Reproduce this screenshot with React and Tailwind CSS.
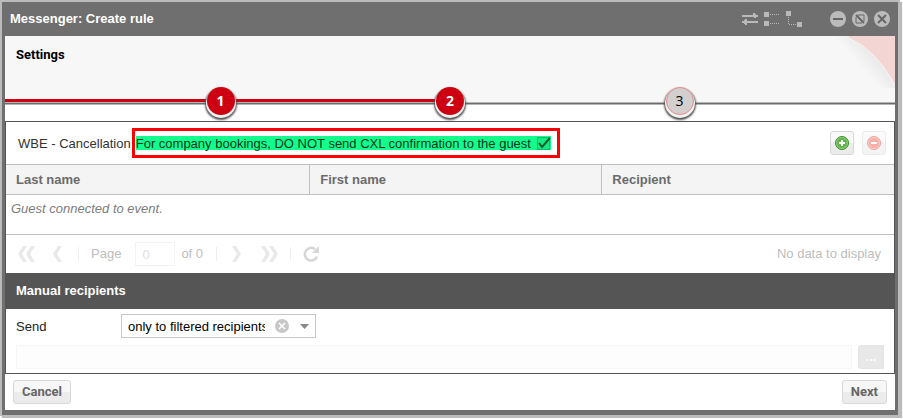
import { useState } from "react";

const STEPS = [1, 2, 3];
const CURRENT_STEP = 2;

const toolButton =
  "flex h-6 w-6 items-center justify-center rounded-[3px] border border-[#d8d8d8] bg-linear-to-b from-[#f8f8f8] from-50% to-[#ebebeb] to-50%";
const textButton =
  "h-6 rounded-[3px] border border-[#d8d8d8] bg-linear-to-b from-[#f7f7f7] from-50% to-[#ececec] to-50% px-2 font-[Roboto,sans-serif] font-bold text-[#666]";

function TitleBar() {
  return (
    <header className="flex h-[34px] items-center justify-between bg-[#6f6f6f] pr-2 pl-2">
      <h1 className="font-bold text-white">Messenger: Create rule</h1>
      <div className="flex items-center">
        <div className="mr-7 flex items-center gap-1.5 text-[#b9b9b9]">
          <button type="button" aria-label="Swap">
            <svg width="16" height="18" viewBox="0 0 16 18" className="block">
              <path
                d="M0 5h11V3h2v1h1v1h2v2h-2v1h-2V7H0zM16 11H5V9H3v1H2v1H0v2h2v1h1v1h2v-2h11z"
                fill="currentColor"
              />
            </svg>
          </button>
          <button type="button" aria-label="List view">
            <svg width="16" height="18" viewBox="0 0 16 18" className="block">
              <path d="M0 2h5v5H0zM0 11h5v5H0z" fill="currentColor" />
              <path d="M6 4.500h10M6 13.500h10" stroke="currentColor" strokeDasharray="1 1" />
            </svg>
          </button>
          <button type="button" aria-label="Tree view">
            <svg width="16" height="18" viewBox="0 0 16 18" className="block">
              <path d="M0 1h5v5H0zM11 12h5v5h-5z" fill="currentColor" />
              <path d="M2.500 7v8M3 14.500h8" stroke="currentColor" strokeDasharray="1 1" />
            </svg>
          </button>
        </div>
        <div className="flex items-center gap-1.5">
          <button type="button" aria-label="Minimize">
            <svg width="16" height="16" viewBox="0 0 16 16" className="block">
              <circle cx="8" cy="8" r="8" fill="#bbb" />
              <path d="M3 8h10" stroke="#666" strokeWidth="2" />
            </svg>
          </button>
          <button type="button" aria-label="Restore">
            <svg width="16" height="16" viewBox="0 0 16 16" className="block">
              <circle cx="8" cy="8" r="8" fill="#bbb" />
              <path d="M4 4l8 8" stroke="#666" strokeWidth="2" />
              <path d="M6 4h6v6M4 6v6h6" fill="none" stroke="#666" />
            </svg>
          </button>
          <button type="button" aria-label="Close">
            <svg width="16" height="16" viewBox="0 0 16 16" className="block">
              <circle cx="8" cy="8" r="8" fill="#bbb" />
              <path d="M4 4l8 8M12 4l-8 8" stroke="#666" strokeWidth="2" />
            </svg>
          </button>
        </div>
      </div>
    </header>
  );
}

function Wizard() {
  return (
    <section className="h-[85px] bg-white">
      <div className="relative h-[63px] bg-[#f7f7f7] px-[11px] pt-[9px]">
        <h2 className="font-[Roboto,sans-serif] font-bold text-black">Settings</h2>
        <svg
          width="64"
          height="52"
          viewBox="0 0 64 52"
          className="absolute top-0 right-0"
          aria-hidden="true"
        >
          <defs>
            <linearGradient
              id="fold"
              gradientUnits="userSpaceOnUse"
              x1="46"
              y1="22"
              x2="32"
              y2="34"
            >
              <stop offset="0" stopColor="#e9e9e9" />
              <stop offset="1" stopColor="#f7f7f7" />
            </linearGradient>
          </defs>
          <path d="M0 0h20Q46 13 64 49v3H40Q10 30 0 0z" fill="url(#fold)" />
          <path d="M18 0h46v48Q45 14 18 2z" fill="#f3d6d3" />
          <path d="M18 2Q45 14 63 48" fill="none" stroke="#fbf3f2" />
        </svg>
      </div>
      <div className="h-[3px] bg-[#f7f7f7]">
        <div className="h-full w-1/2 bg-[#cc0011]" />
      </div>
      <div className="h-[3px] border-y border-t-[#b5b5b5] border-b-[#b5b5b5] bg-[#6b6b6b]" />
      <ol className="relative -mt-[18px] flex justify-evenly">
        {STEPS.map((step) => (
          <li
            key={step}
            className={
              step <= CURRENT_STEP
                ? "flex h-7 w-7 items-center justify-center rounded-full bg-[#cc0011] font-['Open_Sans',sans-serif] text-sm font-bold text-white shadow-[0_2px_0_1px_#f2f2f2,0_3px_2px_2px_#555]"
                : "flex h-7 w-7 items-center justify-center rounded-full border border-[#e88a92] bg-[#d3cfcf] font-['Open_Sans',sans-serif] text-sm text-black shadow-[0_2px_0_1px_#f2f2f2,0_3px_2px_2px_#555]"
            }
          >
            {step}
          </li>
        ))}
      </ol>
    </section>
  );
}

function RecipientToolbar() {
  const [skipGuest, setSkipGuest] = useState(true);

  return (
    <div className="flex h-[42px] items-center pr-2 pl-3">
      <span className="pt-0.5 text-[#333]">WBE - Cancellation</span>
      <div className="ml-px border-3 border-[#ff0000] py-[5px] pr-1.5 pl-px">
        <label className="flex h-[14px] items-center gap-1.5 bg-[#12ff8c] text-[#06351f]">
          <span className="pt-0.5">
            For company bookings, DO NOT send CXL confirmation to the guest
          </span>
          <span className="relative h-[13px] w-[14px]">
            <input
              type="checkbox"
              checked={skipGuest}
              onChange={(e) => setSkipGuest(e.target.checked)}
              className="block h-[13px] w-[13px] appearance-none border border-[#10b868] bg-[#16e884]"
            />
            {skipGuest && (
              <svg
                width="14"
                height="13"
                viewBox="0 0 14 13"
                className="pointer-events-none absolute top-0 left-0"
              >
                <path d="M2 6l3 4 8-9" fill="none" stroke="#075c2c" strokeWidth="2" />
              </svg>
            )}
          </span>
        </label>
      </div>
      <div className="ml-auto flex gap-2">
        <button type="button" aria-label="Add recipient" className={toolButton}>
          <svg width="14" height="14" viewBox="0 0 14 14">
            <circle cx="7" cy="7" r="6.500" fill="#62b54c" stroke="#3d8a31" />
            <circle cx="7" cy="7" r="5.500" fill="none" stroke="#8fcb7d" />
            <path d="M7 4v6M4 7h6" stroke="#fff" strokeWidth="2" />
          </svg>
        </button>
        <button
          type="button"
          aria-label="Remove recipient"
          disabled
          className={`${toolButton} opacity-50`}
        >
          <svg width="14" height="14" viewBox="0 0 14 14">
            <circle cx="7" cy="7" r="6.500" fill="#ee6453" stroke="#dd4c3e" />
            <circle cx="7" cy="7" r="5.500" fill="none" stroke="#f5a094" />
            <path d="M4 7h6" stroke="#fff" strokeWidth="2" />
          </svg>
        </button>
      </div>
    </div>
  );
}

function RecipientTable() {
  return (
    <table className="w-full table-fixed border-collapse border-y border-[#c0c0c0] text-left">
      <thead>
        <tr className="h-[30px] border-b border-[#c0c0c0] bg-[#f4f4f4] text-[#6b6b6b]">
          <th className="w-[34.2%] border-r border-[#c0c0c0] px-2.5">Last name</th>
          <th className="w-[32.9%] border-r border-[#c0c0c0] px-2.5">First name</th>
          <th className="px-2.5">Recipient</th>
        </tr>
      </thead>
      <tbody>
        <tr className="h-10">
          <td colSpan={3} className="px-[5px] pt-1 align-top text-[#7d7d7d] italic">
            Guest connected to event.
          </td>
        </tr>
      </tbody>
    </table>
  );
}

function PageButton({ label, path, width }) {
  return (
    <button type="button" aria-label={label} disabled>
      <svg width={width} height="16" viewBox={`0 0 ${width} 16`} className="block">
        <path d={path} fill="#e9e9e9" />
      </svg>
    </button>
  );
}

function Pager() {
  return (
    <div className="flex h-[38px] items-center pr-[13px] pl-3 text-[#bdbdbd]">
      <PageButton
        label="First page"
        width={17}
        path="M5 0h4L4 8l5 8H5L0 8zM13 0h4l-5 8 5 8h-4L8 8z"
      />
      <span className="w-[18px]" />
      <PageButton label="Previous page" width={9} path="M5 0h4L4 8l5 8H5L0 8z" />
      <span className="mr-3 ml-4 h-[14px] w-px bg-[#eee]" />
      <label htmlFor="page">Page</label>
      <input
        id="page"
        disabled
        defaultValue="0"
        className="mr-1.5 ml-[14px] h-6 w-10 border border-[#f3f3f3] px-1.5 text-[#dedede]"
      />
      <span>of 0</span>
      <span className="mr-[15px] ml-[13px] h-[14px] w-px bg-[#eee]" />
      <PageButton label="Next page" width={9} path="M0 0h4l5 8-5 8H0l5-8z" />
      <span className="w-5" />
      <PageButton
        label="Last page"
        width={17}
        path="M0 0h4l5 8-5 8H0l5-8zM8 0h4l5 8-5 8H8l5-8z"
      />
      <span className="mr-3 ml-3 h-[14px] w-px bg-[#eee]" />
      <button type="button" aria-label="Refresh">
        <svg width="17" height="16" viewBox="0 0 17 16" className="block">
          <path
            d="M12 3.200A6.300 6.300 0 1 0 14 10.500"
            fill="none"
            stroke="#d6d6d6"
            strokeWidth="2.500"
          />
          <path d="M16 0v7H9z" fill="#d6d6d6" />
        </svg>
      </button>
      <span className="ml-auto">No data to display</span>
    </div>
  );
}

function ManualRecipients() {
  return (
    <section>
      <h2 className="flex h-9 items-center bg-[#555] px-2.5 font-bold text-white">
        Manual recipients
      </h2>
      <div className="flex items-center px-2.5 pt-[5px]">
        <label htmlFor="send" className="w-[105px] pt-0.5 text-[#222]">
          Send
        </label>
        <div className="relative">
          <select
            id="send"
            className="block h-6 w-[195px] appearance-none border border-[#c8c8c8] bg-white pt-0.5 pr-[50px] pl-1.5 text-black"
          >
            <option>only to filtered recipients</option>
            <option>to all recipients</option>
          </select>
          <button type="button" aria-label="Clear" className="absolute top-[5px] left-[154px]">
            <svg width="14" height="14" viewBox="0 0 14 14" className="block">
              <circle cx="7" cy="7" r="7" fill="#c8c8c8" />
              <path d="M4 4l6 6M10 4l-6 6" stroke="#fff" strokeWidth="1.500" />
            </svg>
          </button>
          <svg
            width="9"
            height="5"
            viewBox="0 0 9 5"
            className="pointer-events-none absolute top-[10px] left-[179px]"
          >
            <path d="M0 0h9L4.500 5z" fill="#888" />
          </svg>
        </div>
      </div>
      <div className="flex gap-1.5 pt-[7px] pr-2.5 pb-1 pl-2.5">
        <input
          aria-label="Recipients"
          disabled
          className="h-6 min-w-0 flex-1 border border-[#f6f6f6] bg-[#fdfdfd] px-1.5"
        />
        <button
          type="button"
          disabled
          className="h-6 w-[26px] rounded-l-[3px] border border-[#e4e4e4] bg-[#e8e8e8] font-bold text-white"
        >
          ...
        </button>
      </div>
    </section>
  );
}

export default function App() {
  return (
    <div className="bg-white pr-[3px] pb-0.5 font-['Liberation_Sans',sans-serif] text-[13px] leading-5">
      <div className="border-2 border-b border-[#bbb] shadow-[2px_2px_1px_0_#bbb]">
        <TitleBar />
        <div className="border-x-3 border-b-[5px] border-[#6f6f6f] bg-white">
          <Wizard />
          <main className="border border-[#555]">
            <RecipientToolbar />
            <RecipientTable />
            <Pager />
            <ManualRecipients />
          </main>
          <footer className="flex justify-between px-2 py-1.5">
            <button type="button" className={textButton}>
              Cancel
            </button>
            <button type="button" className={textButton}>
              Next
            </button>
          </footer>
        </div>
      </div>
    </div>
  );
}
